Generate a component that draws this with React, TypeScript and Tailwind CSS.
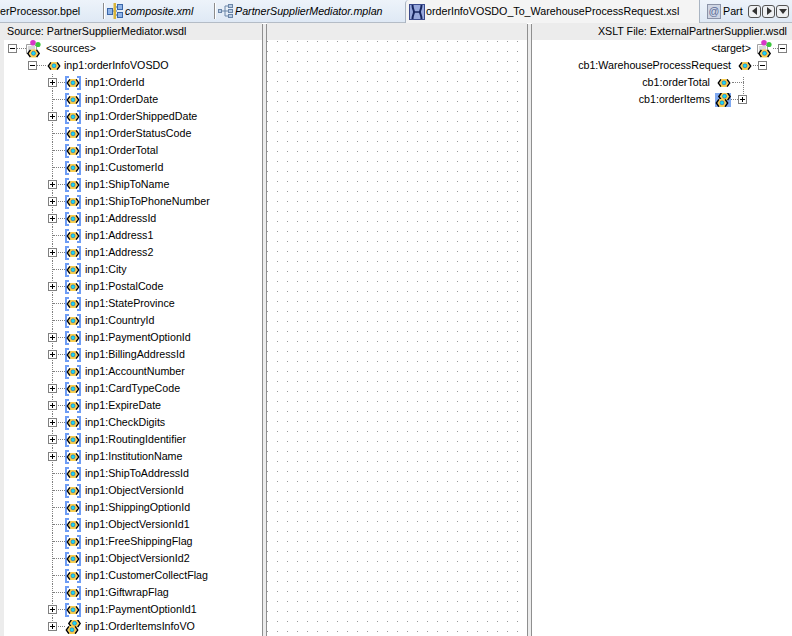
const sourceFields: [string, boolean][] = [
  ["OrderId", true],
  ["OrderDate", false],
  ["OrderShippedDate", true],
  ["OrderStatusCode", false],
  ["OrderTotal", false],
  ["CustomerId", false],
  ["ShipToName", true],
  ["ShipToPhoneNumber", true],
  ["AddressId", true],
  ["Address1", false],
  ["Address2", true],
  ["City", false],
  ["PostalCode", true],
  ["StateProvince", false],
  ["CountryId", false],
  ["PaymentOptionId", true],
  ["BillingAddressId", true],
  ["AccountNumber", false],
  ["CardTypeCode", true],
  ["ExpireDate", true],
  ["CheckDigits", true],
  ["RoutingIdentifier", true],
  ["InstitutionName", true],
  ["ShipToAddressId", false],
  ["ObjectVersionId", false],
  ["ShippingOptionId", false],
  ["ObjectVersionId1", false],
  ["FreeShippingFlag", false],
  ["ObjectVersionId2", false],
  ["CustomerCollectFlag", false],
  ["GiftwrapFlag", false],
  ["PaymentOptionId1", true],
];

function Expander({ open }: { open: boolean }) {
  return (
    <svg width="9" height="9" viewBox="0 0 9 9" shapeRendering="crispEdges" className="shrink-0 relative">
      <rect x="0.5" y="0.5" width="8" height="8" fill="#fff" stroke="#808080" />
      <path d={open ? "M2 4.5h5" : "M2 4.5h5M4.5 2v5"} stroke="#000" />
    </svg>
  );
}

// the black <> with the yellow body and cyan dot, 13x9
function Chevrons({ x = 0, y = 0 }: { x?: number; y?: number }) {
  return (
    <g transform={`translate(${x} ${y})`}>
      <path d="M4 0.5h5l2 4-2 4H4l-2-4z" fill="#fbd04e" />
      <circle cx="6.5" cy="4.3" r="2" fill="#16dcf2" stroke="#2a5ab0" strokeWidth="0.6" />
      <path d="M3.4 0.8L0.8 4.5l2.6 3.7M9.6 0.8L12.2 4.5 9.6 8.2" fill="none" stroke="#000" strokeWidth="1.4" />
    </g>
  );
}

function ElementIcon({ brackets, many }: { brackets?: boolean; many?: boolean }) {
  return (
    <svg width="16" height="14" viewBox="0 0 16 14" className="shrink-0">
      {brackets && <path d="M0 0h4v2H2v10h2v2H0zM16 0h-4v2h2v10h-2v2h4z" fill="#6d9cf5" />}
      {many ? (
        <>
          <Chevrons x={3} y={-1} />
          <Chevrons x={0.5} y={5.5} />
        </>
      ) : (
        <Chevrons x={1.5} y={2.5} />
      )}
    </svg>
  );
}

function RootIcon() {
  return (
    <svg width="16" height="18" viewBox="0 0 16 18" className="shrink-0">
      <path d="M0.5 4.5h8l2 2v7h-10z" fill="#fafafa" stroke="#a0a0a0" />
      <path d="M2 7h7M2 9h7M2 11h5" stroke="#b5b5b5" />
      <circle cx="7" cy="2.8" r="2.8" fill="#d838c8" />
      <circle cx="12" cy="4.5" r="2.6" fill="#3cc63c" />
      <g transform="translate(1 9)">
        <Chevrons />
      </g>
    </svg>
  );
}

function SourceRow({ name, plus, last, many }: { name: string; plus: boolean; last?: boolean; many?: boolean }) {
  return (
    <div className="flex items-center h-[17px] shrink-0">
      <div className="relative w-[61px] h-full flex items-center shrink-0 pl-[44px]">
        <div className={`absolute left-[48px] top-0 border-l border-dotted border-[#808080] ${last ? "h-[9px]" : "h-full"}`} />
        <div className="absolute left-[49px] right-0 top-[8px] border-t border-dotted border-[#808080]" />
        {plus && <Expander open={false} />}
      </div>
      <ElementIcon brackets={!many} many={many} />
      <span className="ml-[4px]">inp1:{name}</span>
    </div>
  );
}

function TabSeparator() {
  return <div className="w-[2px] h-[16px] border-x border-l-[#8c8c8c] border-r-white shrink-0" />;
}

function NavButton({ d }: { d: string }) {
  return (
    <div className="w-[13px] h-[13px] rounded-[3px] border border-[#555] bg-[#eef0f2] flex items-center justify-center shrink-0">
      <svg width="8" height="8" viewBox="0 0 8 8">
        <path d={d} fill="#333" />
      </svg>
    </div>
  );
}

function CompositeIcon() {
  return (
    <svg width="16" height="16" viewBox="0 0 16 16" className="shrink-0">
      <path d="M5 8h5M9 4h2M9 12h2" stroke="#3a66a8" />
      <rect x="0.5" y="5.5" width="5" height="6" fill="#8fb4e8" stroke="#3a66a8" />
      <rect x="10.5" y="1.5" width="5" height="5" fill="#8fb4e8" stroke="#3a66a8" />
      <rect x="10.5" y="9.5" width="5" height="5" fill="#8fb4e8" stroke="#3a66a8" />
      <rect x="6.5" y="0" width="2.5" height="16" fill="#d9b53a" />
    </svg>
  );
}

function PlanIcon() {
  return (
    <svg width="16" height="16" viewBox="0 0 16 16" className="shrink-0">
      <path d="M3 8h4M7 3v10M7 3h3M7 8h3M7 13h3" stroke="#6b86a8" fill="none" />
      <rect x="0.5" y="6.5" width="3" height="3" fill="#b8cce4" stroke="#6b86a8" />
      <rect x="10.5" y="1.5" width="4" height="3" fill="#b8cce4" stroke="#6b86a8" />
      <rect x="10.5" y="6.5" width="4" height="3" fill="#b8cce4" stroke="#6b86a8" />
      <rect x="10.5" y="11.5" width="4" height="3" fill="#b8cce4" stroke="#6b86a8" />
    </svg>
  );
}

function XslIcon() {
  return (
    <svg width="16" height="16" viewBox="0 0 16 16" className="shrink-0">
      <rect x="0.5" y="0.5" width="15" height="15" fill="#98a8dc" stroke="#3a4a8c" />
      <path d="M3.5 1c0 4 1.5 5 1.5 7s-1.5 3-1.5 7M12.5 1c0 4-1.5 5-1.5 7s1.5 3 1.5 7" fill="none" stroke="#16245e" strokeWidth="2" />
      <path d="M5 8h6" stroke="#16245e" strokeWidth="1.5" />
    </svg>
  );
}

function Divider() {
  return <div className="w-[5px] shrink-0 mt-px bg-[#ececec] border-x border-[#8f8f8f]" />;
}

export default function App() {
  return (
    <div className="w-[792px] h-[636px] overflow-hidden flex flex-col bg-white text-[10.7px] leading-none text-black font-['Liberation_Sans',sans-serif]">
      <div className="flex h-[23px] shrink-0 bg-gradient-to-b from-[#edf3fa] to-[#dfe9f5] border-b border-[#b4bcc6]">
        <div className="w-[103px] flex items-center overflow-hidden whitespace-nowrap shrink-0">
          <span>erProcessor.bpel</span>
        </div>
        <div className="flex items-center w-[111px] shrink-0">
          <TabSeparator />
          <div className="ml-[2px]">
            <CompositeIcon />
          </div>
          <span className="italic ml-[2px]">composite.xml</span>
        </div>
        <div className="flex items-center w-[191px] shrink-0">
          <TabSeparator />
          <div className="ml-[2px]">
            <PlanIcon />
          </div>
          <span className="italic ml-[1px] whitespace-nowrap">PartnerSupplierMediator.mplan</span>
        </div>
        <div className="flex items-center w-[295px] shrink-0 h-[23px] bg-[#f4f4f4] border-x border-[#a9b4c2] rounded-tl-[4px] pl-[3px] gap-[1px]">
          <XslIcon />
          <span className="whitespace-nowrap">orderInfoVOSDO_To_WarehouseProcessRequest.xsl</span>
        </div>
        <div className="flex items-center w-[45px] shrink-0 pl-[7px] gap-[2px]">
          <div className="w-[14px] h-[15px] shrink-0 flex items-center justify-center bg-[#cfd6e4] border border-[#8b93a8] text-[#5a6c98]">
            @
          </div>
          <span>Part</span>
        </div>
        <div className="flex items-center gap-[1px] pl-[3px]">
          <NavButton d="M6 0v8L1 4z" />
          <NavButton d="M2 0v8l5-4z" />
          <NavButton d="M0 2h8L4 7z" />
        </div>
      </div>

      <div className="flex-1 min-h-0 flex">
        <div className="w-[262px] shrink-0 flex flex-col border-l-4 border-[#ececec]">
          <div className="h-[17px] shrink-0 bg-[#ececec] flex items-center pl-[3px]">
            Source: PartnerSupplierMediator.wsdl
          </div>
          <div className="flex-1 min-h-0 overflow-hidden flex flex-col">
            <div className="flex items-center h-[17px] shrink-0 pl-[4px]">
              <Expander open />
              <div className="w-[9px] border-t border-dotted border-[#808080]" />
              <RootIcon />
              <span className="ml-[4px]">&lt;sources&gt;</span>
            </div>
            <div className="flex items-center h-[17px] shrink-0 pl-[24px]">
              <Expander open />
              <div className="w-[9px] border-t border-dotted border-[#808080]" />
              <ElementIcon />
              <span className="ml-[2px]">inp1:orderInfoVOSDO</span>
            </div>
            {sourceFields.map(([name, plus]) => (
              <SourceRow key={name} name={name} plus={plus} />
            ))}
            <SourceRow name="OrderItemsInfoVO" plus last many />
          </div>
        </div>
        <Divider />
        <div className="flex-1 min-w-0 flex flex-col">
          <div className="h-[17px] shrink-0 bg-[#ececec]" />
          <div className="flex-1 bg-[conic-gradient(from_270deg_at_1px_1px,#999_90deg,transparent_0)] bg-[size:10px_10px] bg-[position:0px_1px]" />
        </div>
        <Divider />
        <div className="w-[260px] shrink-0 flex flex-col">
          <div className="h-[17px] shrink-0 bg-[#ececec] flex items-center justify-end pr-[5px] whitespace-nowrap">
            XSLT File: ExternalPartnerSupplier.wsdl
          </div>
          <div className="flex flex-col items-end">
            <div className="flex items-center h-[17px] pr-[5px]">
              <span className="mr-[6px]">&lt;target&gt;</span>
              <RootIcon />
              <div className="w-[5px] border-t border-dotted border-[#808080]" />
              <Expander open />
            </div>
            <div className="flex items-center h-[17px] pr-[25px]">
              <span className="mr-[6px]">cb1:WarehouseProcessRequest</span>
              <ElementIcon />
              <div className="w-[5px] border-t border-dotted border-[#808080]" />
              <Expander open />
            </div>
            <div className="flex items-center h-[17px] pr-[48px]">
              <span className="mr-[6px]">cb1:orderTotal</span>
              <ElementIcon />
              <div className="relative w-[12px] border-t border-dotted border-[#808080]">
                <div className="absolute right-0 -top-[6px] h-[19px] border-l border-dotted border-[#808080]" />
              </div>
            </div>
            <div className="flex items-center h-[17px] pr-[45px]">
              <span className="mr-[5px]">cb1:orderItems</span>
              <div className="bg-[#7fa8f0] h-[14px] flex items-center">
                <ElementIcon many />
              </div>
              <div className="w-[7px] border-t border-dotted border-[#808080]" />
              <Expander open={false} />
            </div>
          </div>
        </div>
      </div>
    </div>
  );
}
